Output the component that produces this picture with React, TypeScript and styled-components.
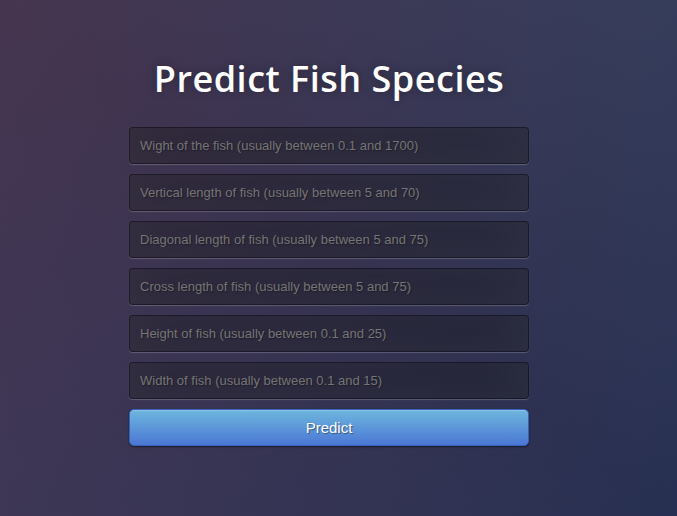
import React from "react";
import styled, { createGlobalStyle } from "styled-components";

const Global = createGlobalStyle`
  html, body { margin: 0; padding: 0; height: 100%; }
  body {
    min-height: 516px;
    background-color: #373352;
    background-image:
      linear-gradient(to top right, rgba(0,0,0,0) 50%, rgba(55,80,110,0.35) 100%),
      linear-gradient(to bottom left, rgba(0,0,0,0) 50%, rgba(70,62,95,0.35) 100%),
      linear-gradient(135deg, #46354f 0%, #273052 100%);
    font-family: "Open Sans", sans-serif;
  }
  #root { height: 100%; }
`;

const Page = styled.div`
  height: 516px;
  display: flex;
  justify-content: center;
  padding-right: 19px;
  box-sizing: border-box;
`;

const Form = styled.form`
  width: 400px;
  display: flex;
  flex-direction: column;
  padding-top: 52px;
`;

const Title = styled.h1`
  margin: 0 0 21px;
  color: #fff;
  text-shadow: 0 0 10px rgba(0,0,0,0.3);
  text-align: center;
  font-family: "Open Sans", sans-serif;
  font-weight: 600;
  font-size: 36px;
  letter-spacing: 0.5px;
  line-height: 54px;
`;

const Input = styled.input`
  box-sizing: border-box;
  width: 100%;
  height: 37px;
  margin-bottom: 10px;
  background: rgba(0,0,0,0.3);
  outline: none;
  padding: 10px;
  font-family: "Liberation Sans", Arial, sans-serif;
  font-size: 13px;
  line-height: 15px;
  color: #fff;
  text-shadow: 1px 1px 1px rgba(0,0,0,0.3);
  border: 1px solid rgba(0,0,0,0.3);
  border-radius: 4px;
  box-shadow: inset 0 -5px 45px rgba(100,100,100,0.2), 0 1px 1px rgba(255,255,255,0.2);
  &::placeholder { color: #757575; }
`;

const Button = styled.button`
  box-sizing: border-box;
  width: 100%;
  height: 37px;
  padding: 9px 14px;
  font-family: "Liberation Sans", Arial, sans-serif;
  font-size: 15px;
  color: #fff;
  text-shadow: 1px 1px 1px rgba(0,0,0,0.4);
  background-color: #4a77d4;
  background-image: linear-gradient(to bottom, #6eb6de, #4a77d4);
  border: 1px solid #3762bc;
  border-radius: 5px;
  box-shadow: inset 0 1px 0 rgba(255,255,255,0.2), 0 1px 2px rgba(0,0,0,0.5);
  cursor: pointer;
`;

const fields = [
  "Wight of the fish (usually between 0.1 and 1700)",
  "Vertical length of fish (usually between 5 and 70)",
  "Diagonal length of fish (usually between 5 and 75)",
  "Cross length of fish (usually between 5 and 75)",
  "Height of fish (usually between 0.1 and 25)",
  "Width of fish (usually between 0.1 and 15)",
];

export default function App() {
  return (
    <>
      <Global />
      <Page>
        <Form onSubmit={(e) => e.preventDefault()}>
          <Title>Predict Fish Species</Title>
          {fields.map((f) => (
            <Input key={f} type="text" placeholder={f} />
          ))}
          <Button type="submit">Predict</Button>
        </Form>
      </Page>
    </>
  );
}
